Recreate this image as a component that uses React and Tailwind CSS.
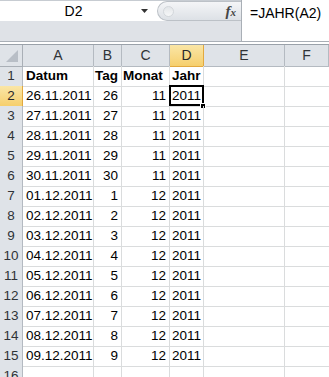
import React from "react";

const cols = ["A", "B", "C", "D", "E", "F"];

const rows = [
  ["Datum", "Tag", "Monat", "Jahr"],
  ["26.11.2011", "26", "11", "2011"],
  ["27.11.2011", "27", "11", "2011"],
  ["28.11.2011", "28", "11", "2011"],
  ["29.11.2011", "29", "11", "2011"],
  ["30.11.2011", "30", "11", "2011"],
  ["01.12.2011", "1", "12", "2011"],
  ["02.12.2011", "2", "12", "2011"],
  ["03.12.2011", "3", "12", "2011"],
  ["04.12.2011", "4", "12", "2011"],
  ["05.12.2011", "5", "12", "2011"],
  ["06.12.2011", "6", "12", "2011"],
  ["07.12.2011", "7", "12", "2011"],
  ["08.12.2011", "8", "12", "2011"],
  ["09.12.2011", "9", "12", "2011"],
  ["", "", "", ""],
];

const gridCols = "grid grid-cols-[23px_71px_28px_48px_34px_81px_1fr]";

function FormulaBar() {
  return (
    <div className="flex h-[42px] border-b border-[#a9afb6]">
      <div className="flex w-[242px] flex-col border-r border-[#a9afb6]">
        <div className="flex h-[21px] border-t border-[#c7ccd2] bg-white">
          <div className="flex w-[157px] items-center">
            <div className="flex-1 pl-[6px] text-center text-[14px] text-black">D2</div>
            <svg width="8" height="5" viewBox="0 0 8 5" className="mr-[8px]">
              <path d="M0 0 H7 L3.5 4 Z" fill="#333" />
            </svg>
          </div>
          <div className="relative flex flex-1 items-center rounded-l-full border border-r-0 border-[#bcc1c7] bg-gradient-to-b from-[#f4f5f7] to-[#dde1e6]">
            <div className="ml-[5px] h-[11px] w-[11px] rounded-full bg-gradient-to-b from-[#e3e6e9] to-[#f6f7f8] border border-[#d3d7db]" />
            <div className="ml-auto mr-[5px] font-['Liberation_Serif',serif] text-[15px] font-bold italic text-[#444] leading-none">
              f<span className="text-[11px]">x</span>
            </div>
          </div>
        </div>
        <div className="flex-1 bg-[#dfe2e7]" />
      </div>
      <div className="flex-1 bg-white pl-[8px] pt-[3px] text-[14px] text-black">=JAHR(A2)</div>
    </div>
  );
}

function Header() {
  return (
    <div className={`${gridCols} h-[22px] border-t border-[#9aa1a9]`}>
      <div className="relative flex items-end justify-end border-r border-b border-[#a9afb6] bg-[#dfe3e8]">
        <svg width="14" height="14" viewBox="0 0 14 14" className="mb-[3px] mr-[3px]">
          <path d="M13 1 V13 H1 Z" fill="#b8bec6" />
        </svg>
      </div>
      {cols.map((c) => (
        <div
          key={c}
          className={`flex items-center justify-center border-r border-b text-[14px] ${
            c === "D"
              ? "border-[#e2a93f] bg-gradient-to-b from-[#fae6a6] to-[#f6cf6c] text-[#2a2a2a]"
              : "border-[#b4bac1] bg-[#dfe3e8] text-[#2f3337]"
          }`}
        >
          {c}
        </div>
      ))}
    </div>
  );
}

function Row({ n, data }) {
  const selected = n === 2;
  return (
    <div className={`${gridCols} h-[20px]`}>
      <div
        className={`flex items-center justify-center border-r border-b text-[13.5px] ${
          selected
            ? "border-[#e2a93f] bg-gradient-to-b from-[#fae6a6] to-[#f6cf6c] text-[#2a2a2a]"
            : "border-[#b4bac1] bg-[#dfe3e8] text-[#2f3337]"
        }`}
      >
        {n}
      </div>
      <div
        className={`flex items-center border-r border-b border-[#dadcdd] pl-[3px] text-[13.5px] text-black ${
          n === 1 ? "font-bold" : ""
        }`}
      >
        {data[0]}
      </div>
      <div
        className={`flex items-center border-r border-b border-[#dadcdd] text-[13.5px] text-black ${
          n === 1 ? "pl-[1px] font-bold" : "justify-end pr-[3px]"
        }`}
      >
        {data[1]}
      </div>
      <div
        className={`flex items-center border-r border-b border-[#dadcdd] text-[13.5px] text-black ${
          n === 1 ? "pl-[1px] font-bold" : "justify-end pr-[3px]"
        }`}
      >
        {data[2]}
      </div>
      <div
        className={`relative flex items-center border-r border-b border-[#dadcdd] text-[13.5px] text-black ${
          n === 1 ? "pl-[2px] font-bold" : "justify-end pr-[2px]"
        }`}
      >
        {data[3]}
        {selected && (
          <>
            <div className="absolute -left-[1px] -top-[1px] h-[21px] w-[35px] border-2 border-black" />
            <div className="absolute -bottom-[3px] -right-[3px] h-[6px] w-[6px] border border-white bg-black" />
          </>
        )}
      </div>
      <div className="border-r border-b border-[#dadcdd]" />
      <div className="border-b border-[#dadcdd]" />
    </div>
  );
}

export default function App() {
  return (
    <div className="h-[377px] w-[329px] overflow-hidden bg-white font-['Liberation_Sans',Arial,sans-serif]">
      <FormulaBar />
      <div className="h-[2px] bg-white" />
      <Header />
      {rows.map((r, i) => (
        <Row key={i} n={i + 1} data={r} />
      ))}
    </div>
  );
}
